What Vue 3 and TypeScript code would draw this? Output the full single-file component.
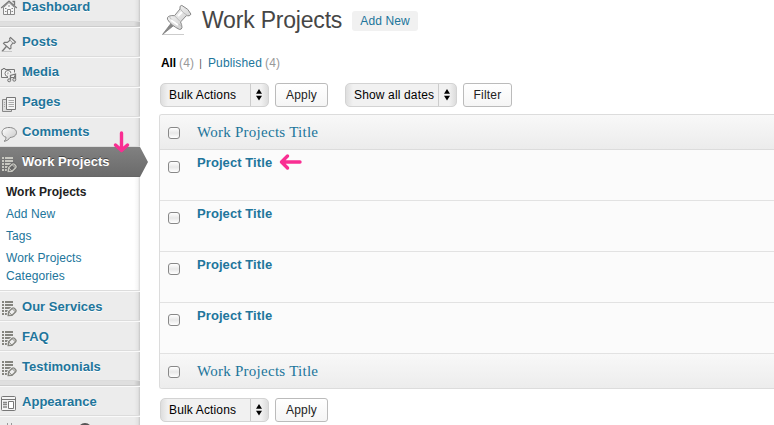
<script setup lang="ts">
interface MenuItem {
  label: string
  icon: 'home' | 'pin' | 'media' | 'pages' | 'comment' | 'post' | 'layout'
}

const contentItems: MenuItem[] = [
  { label: 'Posts', icon: 'pin' },
  { label: 'Media', icon: 'media' },
  { label: 'Pages', icon: 'pages' },
  { label: 'Comments', icon: 'comment' },
]
const typeItems: MenuItem[] = [
  { label: 'Our Services', icon: 'post' },
  { label: 'FAQ', icon: 'post' },
  { label: 'Testimonials', icon: 'post' },
]
const submenu: string[] = ['Work Projects', 'Add New', 'Tags', 'Work Projects Categories']
const rows: string[] = ['Project Title', 'Project Title', 'Project Title', 'Project Title']
</script>

<template>
  <svg class="defs" width="0" height="0">
    <defs>
      <linearGradient id="metal" x1="0" y1="0" x2="1" y2="1">
        <stop offset="0" stop-color="#fff" />
        <stop offset="1" stop-color="#c4c4c4" />
      </linearGradient>
      <symbol id="home" viewBox="0 0 18 18">
        <path d="M3.5 8.5V15.5H14.5V8.5L9 3.5Z" fill="#f6f6f6" stroke="#888" />
        <path d="M1.2 9L9 2L16.8 9M12.5 2.5H14.5V6" fill="none" stroke="#777" stroke-width="1.3" />
        <path d="M7.5 15V10.5H10.5V15M5 9.5H6.5M11.5 9.5H13M5 12.5H6.5M11.5 12.5H13M9 6V8" fill="none" stroke="#888" />
      </symbol>
      <symbol id="pin" viewBox="0 0 18 18">
        <path d="M2 16.5L7.2 10.5" stroke="#777" stroke-width="1.3" />
        <path d="M10.5 2.5L15.5 7L14.3 8.3L12.8 8L10.8 10.6L11 13.2L9.8 14L3.5 8.5L4.5 7.4L7.3 7.4L10 5.2L9.6 3.5Z" fill="#eee" stroke="#777" stroke-width="1.1" />
        <path d="M10 5.2L12.8 8" stroke="#999" /><path d="M2 16.5H12" stroke="#bbb" stroke-width=".8" />
      </symbol>
      <symbol id="media" viewBox="0 0 18 18">
        <path d="M1.5 4.5H3V3.5H5V4.5H14.5V12.5H1.5Z" fill="#f2f2f2" stroke="#777" />
        <circle cx="8" cy="8.5" r="3" fill="#fff" stroke="#777" /><circle cx="8" cy="8.5" r="1.2" fill="#bbb" />
        <path d="M9.5 15V10L16.5 8.5V14" fill="none" stroke="#eee" stroke-width="3" />
        <path d="M10.5 15V10.5L15.5 9V14" fill="none" stroke="#777" stroke-width="1.3" />
        <circle cx="9.2" cy="15.3" r="1.5" fill="#ddd" stroke="#777" /><circle cx="14.3" cy="14.7" r="1.5" fill="#ddd" stroke="#777" />
      </symbol>
      <symbol id="pages" viewBox="0 0 18 18">
        <path d="M6 4.5H2.5V16.5H11.5V14" fill="#ddd" stroke="#888" />
        <path d="M6.5 2.5H15.5V14.5H6.5Z" fill="#f5f5f5" stroke="#777" />
        <path d="M8.5 5.5H14M8.5 7.5H14M8.5 9.5H14M8.5 11.5H14M4 7.5H5M4 9.5H5M4 11.5H5" stroke="#aaa" />
      </symbol>
      <symbol id="comment" viewBox="0 0 18 18">
        <path d="M9 2.5C4.7 2.5 2 4.7 2 7.5C2 10.2 4 11.7 6 12.2C6 14 5.2 15.5 4 16.3C7 16 9 14.3 10 12.5C14 12.2 16.5 10.2 16.5 7.5C16.5 4.7 13.5 2.5 9 2.5Z" fill="url(#metal)" stroke="#888" />
      </symbol>
      <symbol id="post" viewBox="0 0 18 18">
        <path d="M2 3H4M5 3H13M2 6H4M5 6H13M2 9H4M5 9H12M2 12H4M5 12H8M2 15H4M5 15H7" stroke="currentColor" stroke-width="1.9" />
        <path d="M8.2 16.5L8.6 12.8L12.2 9.2Q13.2 8.5 14.3 9.3L15.7 10.7Q16.6 11.8 15.7 12.8L12 16.3Z" class="halo" stroke-width="3" />
        <path d="M8.2 16.5L8.6 12.8L12.2 9.2Q13.2 8.5 14.3 9.3L15.7 10.7Q16.6 11.8 15.7 12.8L12 16.3Z" class="pencil" stroke="currentColor" stroke-width="1.4" />
        <path d="M8.8 13L12 16.2M12 9.5L15.4 12.9" fill="none" stroke="currentColor" />
      </symbol>
      <symbol id="layout" viewBox="0 0 18 18">
        <rect x="1.5" y="2.5" width="14" height="14" rx="1" fill="#f5f5f5" stroke="#777" />
        <path d="M2 5.5H15" stroke="#777" />
        <path d="M8.5 7.5H13.5V14.5H8.5Z" fill="#fff" stroke="#777" />
        <path d="M3 8.5H7M3 10.5H7M3 13H7" stroke="#888" stroke-width="1.3" />
      </symbol>
    </defs>
  </svg>
  <div class="admin">
    <nav class="sidebar">
      <a class="item first"><svg class="icon"><use href="#home" /></svg>Dashboard</a>
      <div class="separator"></div>
      <a v-for="item in contentItems" :key="item.label" class="item upper">
        <svg class="icon"><use :href="'#' + item.icon" /></svg>{{ item.label }}
      </a>
      <a class="item upper current">
        <svg class="icon"><use href="#post" /></svg>Work Projects
        <svg class="down-arrow" width="17" height="22" viewBox="0 0 17 22"><path d="M8.5 2V19M2.5 14L8.5 19.5L14.5 14" /></svg>
      </a>
      <div class="submenu">
        <a v-for="(label, i) in submenu" :key="label" :class="{ active: i === 0 }">{{ label }}</a>
      </div>
      <a v-for="item in typeItems" :key="item.label" class="item">
        <svg class="icon"><use :href="'#' + item.icon" /></svg>{{ item.label }}
      </a>
      <div class="separator"></div>
      <a class="item"><svg class="icon"><use href="#layout" /></svg>Appearance</a>
      <div class="item next"><i class="plug"></i><i class="badge"></i></div>
    </nav>
    <main class="content">
      <header class="heading">
        <svg class="big-pin" width="32" height="32" viewBox="0 0 32 32">
          <path d="M2 30.5H23" stroke="#ccc" />
          <path d="M1.5 30.5L11 18L14 20.5Z" fill="#888" stroke="#777" stroke-width=".7" />
          <path d="M8 12.2Q6 13 6.4 15.2Q10 21.5 18.6 25.5Q20.7 25.5 21 23.5Q20.9 20.4 19.5 18L25.3 11.7Q28.8 12.6 30 10.2Q28 4.8 20.8 1.4Q18.2 1.5 19 5L13.5 11.7Q10.8 11.2 8 12.2Z" fill="url(#metal)" stroke="#888" />
          <path d="M8 12.3Q12 18.5 20.4 21.6M19 4.5Q21.5 9 26.5 11.5M13.8 12L19.1 17.4" fill="none" stroke="#bbb" />
          <path d="M17 12L21 8M10 16L17 21" stroke="#fff" stroke-width="2" />
        </svg>
        <h2>Work Projects</h2>
        <a class="add-new">Add New</a>
      </header>
      <div class="filters">
        <b>All</b><span class="count">(4)</span><span class="bar">|</span><a>Published</a><span class="count">(4)</span>
      </div>
      <div class="toolbar">
        <div class="select bulk"><span>Bulk Actions</span><svg width="8" height="12" viewBox="0 0 8 12"><path d="M4 0L7 4.7H1ZM4 11.5L1 6.8H7Z" /></svg></div>
        <button class="apply">Apply</button>
        <div class="select dates"><span>Show all dates</span><svg width="8" height="12" viewBox="0 0 8 12"><path d="M4 0L7 4.7H1ZM4 11.5L1 6.8H7Z" /></svg></div>
        <button class="filter">Filter</button>
      </div>
      <section class="table">
        <div class="table-head"><i class="check"></i><a>Work Projects Title</a></div>
        <div v-for="(row, i) in rows" :key="i" class="table-row">
          <i class="check"></i><a>{{ row }}</a>
          <svg v-if="i === 0" class="left-arrow" width="23" height="18" viewBox="0 0 23 18"><path d="M21 9H3M8.5 3L2.5 9L8.5 15" /></svg>
        </div>
        <div class="table-head foot"><i class="check"></i><a>Work Projects Title</a></div>
      </section>
      <div class="toolbar bottom">
        <div class="select bulk"><span>Bulk Actions</span><svg width="8" height="12" viewBox="0 0 8 12"><path d="M4 0L7 4.7H1ZM4 11.5L1 6.8H7Z" /></svg></div>
        <button class="apply">Apply</button>
      </div>
    </main>
  </div>
</template>

<style>
body { margin: 0; overflow: hidden; background: #fff; }
</style>

<style scoped>
* { box-sizing: border-box; }
.defs { position: absolute; }
.admin { display: flex; width: 774px; height: 425px; overflow: hidden; font-family: "Liberation Sans", Arial, sans-serif; background: #fff; }
.sidebar { width: 140px; height: 425px; flex: none; background: linear-gradient(90deg, transparent 134px, rgba(0,0,0,.04) 138px, rgba(0,0,0,.16) 140px), #ececec; }
.item { display: flex; align-items: center; height: 30px; color: #21759b; font-size: 13px; font-weight: bold; letter-spacing: .03px; white-space: nowrap; border-top: 1px solid #fafafa; border-bottom: 1px solid #dcdcdc; text-shadow: 0 1px 0 #fff; }
.item.first { height: 22px; padding-bottom: 8px; border-top: 0; }
.item.upper { padding-bottom: 2px; }
.icon { width: 18px; height: 18px; margin: 4px 4px 0 0; flex: none; color: #85857f; --fill: #eee; }
.first .icon { margin-top: 3px; }
.upper .icon { margin-top: 6px; }
.pencil { fill: var(--fill); }
.halo { fill: var(--fill); stroke: var(--fill); }
.separator { height: 5px; background: linear-gradient(90deg, transparent 134px, rgba(0,0,0,.15) 140px), #dfdfdf; border-bottom: 1px solid #ccc; }
.current { position: relative; width: 140px; color: #fff; background: linear-gradient(#808080, #6b6b6b); border-top: 1px solid #808080; border-bottom: 1px solid #666; text-shadow: 0 -1px 0 #444; }
.current::after { content: ""; position: absolute; left: 140px; top: -1px; width: 8px; height: 30px; background: linear-gradient(#808080, #696969); clip-path: polygon(0 0, 100% 50%, 0 100%); }
.current .icon { color: #c8c8c1; --fill: #666; }
.down-arrow { position: absolute; left: 113px; top: -17px; }
.down-arrow path, .left-arrow path { fill: none; stroke: #f92e92; stroke-width: 3.4; stroke-linecap: round; stroke-linejoin: round; }
.next { align-items: flex-start; padding-top: 6px; }
.plug { width: 5px; height: 12px; margin-left: 7px; border: solid #999; border-width: 0 1px; }
.badge { width: 14px; height: 14px; margin-left: 66px; border-radius: 7px; background: #555; }
.submenu { height: 114px; padding: 4px 20px 0 6px; background: linear-gradient(90deg, transparent 134px, rgba(0,0,0,.04) 138px, rgba(0,0,0,.16) 140px), #fff; border-bottom: 1px solid #dcdcdc; }
.submenu a { display: block; padding: 2px 0; font-size: 12px; line-height: 18px; color: #21759b; letter-spacing: .08px; }
.submenu .active { color: #222; font-weight: bold; letter-spacing: 0; }
.content { flex: 1; padding: 0 0 0 19px; min-width: 0; }
.heading { display: flex; align-items: flex-start; height: 52px; padding-top: 4px; }
.big-pin { margin-left: 2px; flex: none; }
.heading h2 { margin: 1px 0 0 9px; width: 141px; font-size: 23px; line-height: 30px; font-weight: normal; letter-spacing: -.2px; color: #464646; white-space: nowrap; }
.add-new { margin: 7px 0 0 9px; width: 66px; height: 20px; line-height: 20px; text-align: center; font-size: 12px; letter-spacing: .1px; color: #21759b; background: #f1f1f1; border-radius: 3px; }
.filters { display: flex; align-items: center; height: 22px; padding-left: 2px; font-size: 12px; letter-spacing: .15px; color: #21759b; }
.filters b { color: #000; letter-spacing: -.1px; }
.count { color: #999; margin-left: 3px; }
.bar { color: #555; margin: 0 6px 0 5px; font-size: 10px; }
.toolbar { display: flex; height: 24px; margin: 9px 0 7px 1px; }
.select { display: flex; align-items: center; justify-content: space-between; height: 24px; padding: 0 5px 0 8px; font-size: 12px; color: #000; letter-spacing: .15px; white-space: nowrap; border-radius: 5px; border: 1px solid #d3d3d3; background: linear-gradient(90deg, #dedede, #f1f1f1 7px, #f1f1f1 calc(100% - 7px), #dcdcdc); position: relative; }
.select::after { content: ""; position: absolute; right: 17px; top: 0; width: 1px; height: 22px; background: #ccc; }
.bulk { width: 109px; }
.dates { width: 112px; margin-left: 17px; }
button { height: 24px; padding: 0; margin: 0 0 0 6px; font: 12px "Liberation Sans", Arial, sans-serif; letter-spacing: .2px; color: #222; border: 1px solid #bbb; border-radius: 3px; background: linear-gradient(#fff, #f5f5f5); }
.apply { width: 53px; }
.filter { width: 49px; }
.table { height: 275px; border: 1px solid #dcdcdc; border-right: 0; border-radius: 3px 0 0 3px; background: #fbfbfb; overflow: hidden; }
.table-head { display: flex; align-items: center; height: 35px; border-bottom: 1px solid #dcdcdc; background: linear-gradient(#f8f8f8, #ececec); color: #21759b; font: 15px "Liberation Serif", serif; letter-spacing: .26px; }
.check { width: 12px; height: 12px; margin: 2px 17px 0 8px; flex: none; border: 1px solid #888; border-radius: 3px; background: linear-gradient(#fff, #e8e8e8 50%, #fff); }
.table-row { display: flex; align-items: flex-start; height: 51px; border-bottom: 1px solid #e2e2e2; color: #21759b; font-size: 13px; font-weight: bold; letter-spacing: .08px; }
.table-row .check { margin-top: 11px; }
.table-row a { margin-top: 5px; line-height: 15px; }
.left-arrow { margin: 3px 0 0 7px; }
.foot { border: 0; }
.foot .check { margin-top: 0; }
.bottom { margin-top: 9px; }
</style>
